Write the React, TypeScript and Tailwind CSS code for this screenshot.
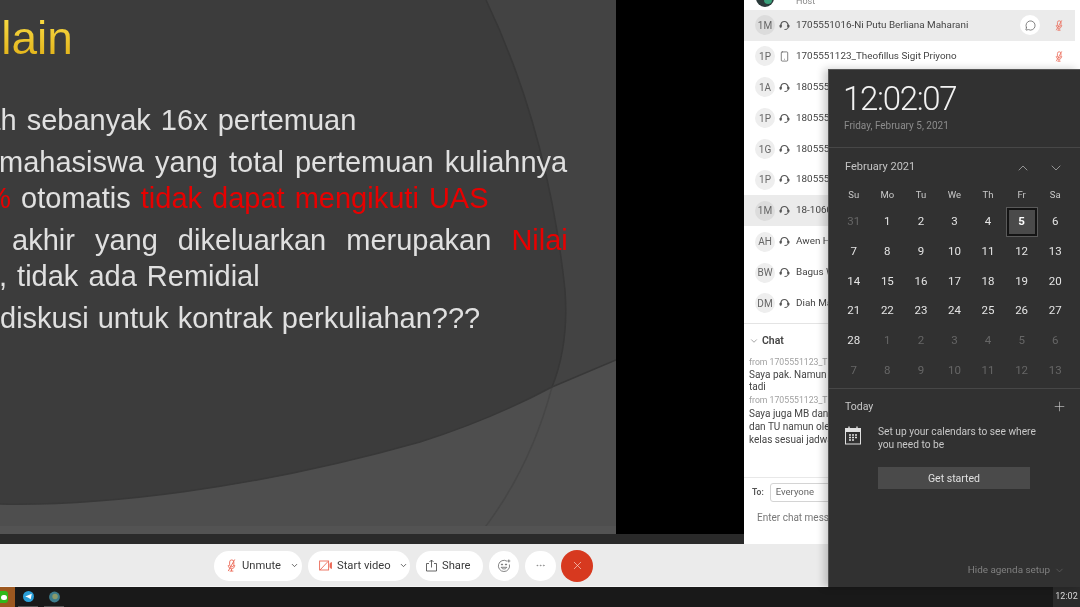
import { Smartphone, ChevronDown, ChevronUp, MessageCircle, Plus, X, Ellipsis } from "lucide-react";

const font = "font-['Roboto','Noto_Sans',sans-serif]";

const people = [
  { tag: "1M", name: "1705551016-Ni Putu Berliana Maharani", hot: true, muted: true, chat: true },
  { tag: "1P", name: "1705551123_Theofillus Sigit Priyono", phone: true, muted: true },
  { tag: "1A", name: "1805551" },
  { tag: "1P", name: "1805551" },
  { tag: "1G", name: "1805551" },
  { tag: "1P", name: "1805551" },
  { tag: "1M", name: "18-1060", hot: true },
  { tag: "AH", name: "Awen Hi" },
  { tag: "BW", name: "Bagus Wi" },
  { tag: "DM", name: "Diah Ma" },
];

const dayNames = ["Su", "Mo", "Tu", "We", "Th", "Fr", "Sa"];
const prevDays = [31];
const monthDays = Array.from({ length: 28 }, (_, i) => i + 1);
const nextDays = [1, 2, 3, 4, 5, 6, 7, 8, 9, 10, 11, 12, 13];

function MutedMic({ size }: { size: number }) {
  return (
    <svg width={size} height={size} viewBox="0 0 12 14" fill="none" stroke="#ec6a58" strokeWidth="1">
      <rect x="4" y="1" width="4.5" height="7.5" rx="2.2" />
      <path d="M2.5 6.5C2.5 9 4 10.5 6 10.5C8 10.5 9.5 9 9.5 6.5M6 10.5V13M4 13H8" />
      <path d="M9.5 0.5L2.5 13" />
    </svg>
  );
}

function Headset() {
  return (
    <svg width="11" height="11" viewBox="0 0 11 11" fill="none" stroke="#555">
      <path d="M2 6.5V5A3.5 3.5 0 0 1 9 5V6.5" strokeWidth="1.1" />
      <rect x="0.8" y="4.8" width="1.7" height="2.8" rx="0.8" fill="#555" strokeWidth="0.5" />
      <rect x="8.5" y="4.8" width="1.7" height="2.8" rx="0.8" fill="#555" strokeWidth="0.5" />
      <path d="M9 7.5C9 9 7.5 9.5 5.5 9.5" strokeWidth="1" />
    </svg>
  );
}

function Slide() {
  return (
    <div className="relative h-[534px] w-[616px] overflow-hidden bg-[#3c3c3c] font-['Liberation_Sans',Arial,sans-serif]">
      <svg className="absolute inset-0" width="616" height="534" viewBox="0 0 616 534">
        <path d="M486 0 Q548 130 565 290 Q569 345 552 387 L616 360 L616 0 Z" fill="#434343" />
        <path d="M0 504 C100 506 250 490 420 442 Q490 420 552 387 L616 360 L616 534 L0 534 Z" fill="#4e4e4e" />
        <path d="M552 387 Q530 470 480 534" fill="none" stroke="#464646" strokeWidth="1.5" />
        <path d="M486 0 Q548 130 565 290 Q569 345 552 387" fill="none" stroke="#373737" strokeWidth="1.5" />
        <path d="M0 504 C100 506 250 490 420 442 Q490 420 552 387 L616 360" fill="none" stroke="#383838" strokeWidth="1.5" />
        <rect x="0" y="526" width="616" height="8" fill="#535353" />
      </svg>
      <div className="relative flex flex-col whitespace-nowrap pt-2 text-[29px] leading-9 text-[#e0e0e0]">
        <div className="ml-[-55px] h-[60px] bg-linear-to-b from-[#ffe64a] to-[#dca800] bg-clip-text text-[46px] leading-[60px] text-transparent">Selain</div>
        <div className="mt-[34px] ml-[-64px] [word-spacing:2px]">Kuliah sebanyak 16x pertemuan</div>
        <div className="mt-[6px] ml-[-1px] [word-spacing:3px]">mahasiswa yang total pertemuan kuliahnya</div>
        <div className="ml-[-47px] [word-spacing:2px]"><span className="text-[#e80000]">75%</span> otomatis <span className="text-[#e80000]">tidak dapat mengikuti UAS</span></div>
        <div className="mt-[6px] ml-[12px] [word-spacing:12px]">akhir yang dikeluarkan merupakan <span className="text-[#e80000]">Nilai</span></div>
        <div className="ml-[-1px] [word-spacing:2px]">, tidak ada Remidial</div>
        <div className="mt-[6px] [word-spacing:1px]">diskusi untuk kontrak perkuliahan???</div>
      </div>
    </div>
  );
}

function Person({ tag, name, hot, muted, chat, phone }: { tag: string; name: string; hot?: boolean; muted?: boolean; chat?: boolean; phone?: boolean }) {
  return (
    <div className={`flex h-[30.9px] items-center pl-[11px] pr-[11px] whitespace-nowrap text-[9.9px] text-[#444] ${hot ? "bg-[#ebebeb]" : ""}`}>
      <div className={`flex h-5 w-5 shrink-0 items-center justify-center rounded-full text-[10px] text-[#666] ${hot ? "bg-[#dcdcdc]" : "bg-[#eeeeee]"}`}>{tag}</div>
      <div className="ml-[1px] flex w-[17px] justify-center text-[#555]">
        {phone ? <Smartphone size={11} strokeWidth={1.6} /> : <Headset />}
      </div>
      <div className="ml-[3px] flex-1">{name}</div>
      {chat && (
        <div className="flex h-5 w-5 items-center justify-center rounded-full bg-white text-[#444]">
          <MessageCircle size={11} strokeWidth={1.4} />
        </div>
      )}
      {muted && (
        <div className="ml-[14px] flex w-[10px] justify-center">
          <MutedMic size={11} />
        </div>
      )}
    </div>
  );
}

function Panel() {
  return (
    <div className={`flex h-[544px] w-[336px] flex-col overflow-hidden bg-white pr-[5px] ${font}`}>
      <div className="h-[10px] overflow-hidden">
        <div className="mt-[-6px] flex items-center pl-[11px]">
          <svg width="20" height="12" viewBox="0 0 20 12">
            <circle cx="10" cy="2" r="9" fill="#2b3a3a" />
            <circle cx="13" cy="4" r="4" fill="#3aa07a" />
          </svg>
          <span className="ml-[21px] text-[9px] leading-[15px] text-[#888]">Host</span>
        </div>
      </div>
      {people.map((p, i) => (
        <Person key={i} {...p} />
      ))}
      <div className="mt-[4px] border-t border-[#e4e4e4] pt-[9px] pl-[5px] whitespace-nowrap">
        <div className="flex h-[16px] items-center text-[#666]">
          <ChevronDown size={10} strokeWidth={1.4} />
          <span className="ml-[3px] text-[10.5px] font-semibold text-[#444]">Chat</span>
        </div>
        <div className="mt-[7px] text-[8.7px] leading-[12.6px] text-[#a0a0a0]">from 1705551123_The</div>
        <div className="text-[10px] leading-[12.8px] text-[#444]">
          <div>Saya pak. Namun s</div>
          <div>tadi</div>
        </div>
        <div className="text-[8.7px] leading-[12.6px] text-[#a0a0a0]">from 1705551123_The</div>
        <div className="text-[10px] leading-[13px] text-[#444]">
          <div>Saya juga MB dan</div>
          <div>dan TU namun ole</div>
          <div>kelas sesuai jadwal</div>
        </div>
      </div>
      <div className="mt-[31px] flex-1 border-t border-[#e8e8e8] whitespace-nowrap">
        <div className="flex items-center pl-[8px] pt-[5px]">
          <span className="text-[8.5px] font-semibold text-[#555]">To:</span>
          <div className="ml-[6px] flex h-[19px] w-[80px] items-center rounded-[3px] border border-[#d4d4d4] pl-[5px] text-[9.5px] text-[#666]">Everyone</div>
        </div>
        <div className="mt-[9px] pl-[13px] text-[10px] leading-[14px] text-[#777]">Enter chat messa</div>
      </div>
    </div>
  );
}

function Toolbar() {
  return (
    <div className={`flex h-[43px] items-center gap-[6px] border-b border-[#f4f4f4] bg-[#ebebeb] pl-[214px] pt-[1px] text-[11.2px] text-[#3a3a3a] ${font}`}>
      <div className="flex h-[30px] w-[88px] items-center rounded-full bg-white pl-[11px]">
        <MutedMic size={13} />
        <span className="ml-[4px] pt-[1px]">Unmute</span>
        <ChevronDown size={9} className="ml-[9px]" />
      </div>
      <div className="flex h-[30px] w-[102px] items-center rounded-full bg-white pl-[11px]">
        <svg width="13" height="11" viewBox="0 0 13 11" fill="none" stroke="#ec6a58" strokeWidth="0.9">
          <rect x="0.6" y="1" width="9" height="9" />
          <path d="M1 10L9 1.5" />
          <path d="M11 3.5L12.5 2.5V8.5L11 7.5Z" fill="#ec6a58" />
        </svg>
        <span className="ml-[5px] pt-[1px]">Start video</span>
        <ChevronDown size={9} className="ml-[8px]" />
      </div>
      <div className="flex h-[30px] w-[67px] items-center rounded-full bg-white pl-[9px]">
        <svg width="13" height="13" viewBox="0 0 13 13" fill="none" stroke="#555" strokeWidth="0.9">
          <path d="M4 4.5H1.5V12H11.5V4.5H9" />
          <path d="M6.5 8.5V1M4.5 3L6.5 1L8.5 3" />
        </svg>
        <span className="ml-[4px] pt-[1px]">Share</span>
      </div>
      <div className="flex h-[30px] w-[30px] items-center justify-center rounded-full bg-white">
        <svg width="14" height="14" viewBox="0 0 14 14" fill="none" stroke="#666" strokeWidth="0.8">
          <path d="M10 2.2A5.6 5.6 0 1 0 12.4 5.5" />
          <path d="M4.2 8.3C5 10.5 9 10.5 9.8 8.3Z" />
          <circle cx="5" cy="5.5" r="0.6" fill="#666" />
          <circle cx="9" cy="5.5" r="0.6" fill="#666" />
          <path d="M11.8 0.5V3.5M10.3 2H13.3" />
        </svg>
      </div>
      <div className="flex h-[30px] w-[31px] items-center justify-center rounded-full bg-white text-[#777]">
        <Ellipsis size={11} strokeWidth={1.2} />
      </div>
      <div className="ml-[-1px] flex h-[32px] w-[32px] items-center justify-center rounded-full bg-[#d7391f] text-[#f8d2c8]">
        <X size={13} strokeWidth={1.3} />
      </div>
    </div>
  );
}

function Taskbar() {
  return (
    <div className={`flex h-[20px] items-stretch bg-[#191919] ${font}`}>
      <div className="flex w-[15px] items-center bg-[#9c5820]">
        <div className="flex h-[12px] w-[8px] items-center justify-end rounded-r-[3px] bg-[#2fb81a] pr-[1px]">
          <div className="h-[5px] w-[6px] rounded-full bg-white" />
        </div>
      </div>
      <div className="ml-[3px] flex w-[20px] items-center justify-center border-b border-[#555]">
        <svg width="11" height="11" viewBox="0 0 10 10">
          <circle cx="5" cy="5" r="5" fill="#2a9fd8" />
          <path d="M2 5L8 2.5L7 7.5L4.5 6Z" fill="white" />
        </svg>
      </div>
      <div className="ml-[6px] flex w-[20px] items-center justify-center border-b border-[#555]">
        <svg width="11" height="12" viewBox="0 0 10 11">
          <circle cx="5" cy="5.5" r="5" fill="#3d7c8c" />
          <circle cx="5.5" cy="5" r="2.5" fill="#8a9a6a" />
        </svg>
      </div>
      <div className="ml-auto flex w-[27px] items-center justify-center bg-[#2b2b2b] text-[9px] text-[#d8d8d8]">12:02</div>
    </div>
  );
}

function Flyout() {
  return (
    <div className={`absolute right-0 top-[69px] flex h-[518px] w-[252px] flex-col border-l border-t border-[#555] bg-[#313131] shadow-[-4px_0_8px_rgba(0,0,0,0.2)] ${font}`}>
      <div className="h-[78px] border-b border-[#474747] pl-[14px] pt-[8px]">
        <div className="text-[33px] font-light leading-[42px] tracking-[-1.3px] text-[#f2f2f2]">12:02:07</div>
        <div className="mt-[-1px] pl-[1px] text-[10px] leading-[14px] text-[#8c8c8c]">Friday, February 5, 2021</div>
      </div>
      <div className="h-[241px] border-b border-[#474747]">
        <div className="flex h-[39px] items-center pl-[16px] text-[11px] text-[#c4c4c4]">
          <span>February 2021</span>
          <ChevronUp size={16} strokeWidth={1} className="ml-auto mr-[17px] text-[#c4c4c4]" />
          <ChevronDown size={16} strokeWidth={1} className="mr-[16px] text-[#c4c4c4]" />
        </div>
        <div className="mt-[-2px] grid auto-rows-[29.7px] grid-cols-7 px-[8px] text-center text-[11.5px]">
          {dayNames.map((d) => (
            <div key={d} className="flex h-[20px] items-center justify-center text-[9.5px] text-[#c8c8c8]">{d}</div>
          ))}
          {prevDays.map((d) => (
            <div key={d} className="mt-[-15px] flex items-center justify-center text-[#666]">{d}</div>
          ))}
          {monthDays.map((d) => (
            <div key={d} className="mt-[-15px] flex items-center justify-center text-[#e4e4e4]">
              {d === 5 ? (
                <div className="flex h-[28px] w-[30px] items-center justify-center border-2 border-[#141414] bg-[#4a4a4a] font-bold text-white outline outline-[#5a5a5a]">{d}</div>
              ) : (
                d
              )}
            </div>
          ))}
          {nextDays.map((d) => (
            <div key={d} className="mt-[-15px] flex items-center justify-center text-[#666]">{d}</div>
          ))}
        </div>
      </div>
      <div className="flex flex-1 flex-col pl-[16px]">
        <div className="flex h-[35px] items-center text-[10.5px] text-[#c8c8c8]">
          <span>Today</span>
          <Plus size={15} strokeWidth={1} className="ml-auto mr-[13px] text-[#d0d0d0]" />
        </div>
        <div className="mt-[1px] flex">
          <svg width="17" height="19" viewBox="0 0 17 19" className="mt-[1px]">
            <rect x="0.5" y="2.5" width="15" height="15.5" fill="none" stroke="#e0e0e0" strokeWidth="1" />
            <rect x="0.5" y="2.5" width="15" height="3.5" fill="#e0e0e0" />
            <path d="M4 0.5V3M12 0.5V3" stroke="#e0e0e0" strokeWidth="1.4" />
            <path d="M4 9H6M7 9H9M10 9H12M4 11.5H6M7 11.5H9M10 11.5H12M4 14H6M7 14H9" stroke="#e0e0e0" strokeWidth="1.4" />
          </svg>
          <div className="ml-[16px] text-[10.2px] leading-[13px] text-[#c8c8c8]">
            <div>Set up your calendars to see where</div>
            <div>you need to be</div>
          </div>
        </div>
        <div className="ml-[33px] mt-[16px] flex h-[22px] w-[152px] items-center justify-center bg-[#4a4a4a] pt-[1px] text-[10.5px] text-[#e0e0e0]">Get started</div>
        <div className="mr-[15px] mt-auto mb-[9px] flex items-center justify-end text-[9.9px] text-[#808080]">
          <span>Hide agenda setup</span>
          <ChevronDown size={11} strokeWidth={1} className="ml-[4px]" />
        </div>
      </div>
    </div>
  );
}

export default function App() {
  return (
    <div className="relative h-[607px] w-[1080px] overflow-hidden bg-black blur-[0.5px]">
      <div className="flex h-[544px]">
        <div className="w-[616px]">
          <Slide />
          <div className="h-[10px] bg-[#2a2a2a]" />
        </div>
        <div className="w-[128px]">
          <div className="h-[534px] bg-black" />
          <div className="h-[10px] bg-[#2a2a2a]" />
        </div>
        <Panel />
      </div>
      <Toolbar />
      <Taskbar />
      <Flyout />
    </div>
  );
}
